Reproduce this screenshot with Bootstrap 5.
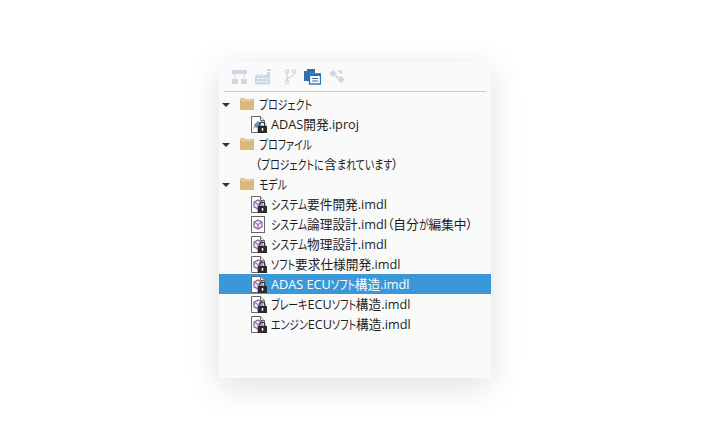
<!DOCTYPE html>
<html lang="ja">
<head>
<meta charset="utf-8">
<title>モデル</title>
<link href="https://cdn.jsdelivr.net/npm/bootstrap@5.3.0/dist/css/bootstrap.min.css" rel="stylesheet">
<style>
html,body{height:100%;background:#fff;overflow:hidden}
body{font-family:"Open Sans","Noto Sans CJK JP",sans-serif;font-size:12.7px;font-feature-settings:"palt";color:#1c1c1c;padding:62px 0 0 219px}
.pane{width:272px;height:316px;background:#fafafa;box-shadow:0 8px 32px rgba(0,0,0,.13)}
.tools{height:30px;margin:0 5px;padding:0 8px 0 8px;border-bottom:1px solid #c9c9c9;gap:8px}
.tools svg{display:block;flex:none}
.t3{margin-left:3px}
.tree{margin-top:2px}
.trow{height:20px;white-space:nowrap;line-height:20px}
.trow.sel{background:#3a98d8;color:#fff}
.arrow{width:0;height:0;border-left:4px solid transparent;border-right:4px solid transparent;border-top:4px solid #333;margin:1px 10px 0 3px;flex:none}
.fold{margin-right:5px;flex:none}
.leaf{margin-left:32px}
.leaf svg{margin-right:4px;flex:none}
.plain{margin-left:36px}
.kn{display:inline-block;transform:scaleX(.78);transform-origin:0 50%}
</style>
</head>
<body>
<svg width="0" height="0" class="position-absolute">
<symbol id="lock" viewBox="0 0 16 17">
<path d="M8.800 10V8.700A2.500 2.500 0 0 1 13.800 8.700V10" fill="none" stroke="#3a3a3a" stroke-width="1.300"/>
<rect x="7" y="10" width="9" height="7" fill="#2b2b2b"/>
<rect x="10.800" y="12" width="1.400" height="2.800" fill="#fff"/>
</symbol>
<symbol id="model" viewBox="0 0 16 17">
<path d="M.5.500H9.500L13.500 4.500V10H7V16.500H.5Z" fill="#fff" stroke="#666"/>
<path d="M9.500.5V4.500H13.500" fill="#eee" stroke="#666"/>
<path d="M7 4L11 6.200V10.800L7 13L3 10.800V6.200Z" fill="#efe7f5" stroke="#8a5aa8" stroke-width="1.200"/>
<path d="M3 6.200L7 8.500L11 6.200M7 8.500V13" fill="none" stroke="#8a5aa8"/>
<use href="#lock"/>
</symbol>
<symbol id="folder" viewBox="0 0 14 12">
<path d="M0 1.500V12H14V1H5L4 0H1Z" fill="#dcb67a"/>
<rect x="1" y="1.500" width="12" height="1" fill="#f2e3c8"/>
</symbol>
</svg>
<main class="pane">
<div class="tools d-flex align-items-center">
<svg width="15" height="15" viewBox="0 0 15 15"><g fill="#cbd9e6"><rect x="0" y="1" width="15" height="4"/><rect x="0" y="10" width="6" height="5"/><rect x="9" y="10" width="6" height="5"/><rect x="2.500" y="5" width="1" height="5"/><rect x="11.500" y="5" width="1" height="5"/></g></svg>
<svg width="18" height="16" viewBox="0 0 18 16"><path d="M0 7L4 5V7L8 5V7L12 5V3H15V15.500H0Z" fill="#cbd9e6"/><rect x="12" y="0" width="4" height="2" fill="#cbd9e6"/><g fill="#fafafa"><rect x="2" y="9" width="3" height="1"/><rect x="6" y="9" width="3" height="1"/><rect x="10" y="9" width="3" height="1"/><rect x="2" y="12" width="3" height="1"/><rect x="6" y="12" width="3" height="1"/><rect x="10" y="12" width="3" height="1"/></g></svg>
<svg class="t3" width="12" height="16" viewBox="0 0 12 16" fill="none" stroke="#cbd9e6" stroke-width="1.300"><circle cx="3" cy="2.500" r="1.600"/><circle cx="10" cy="2.500" r="1.600"/><circle cx="3" cy="13" r="1.600"/><path d="M3 4V11.500M10 4V5C10 8 3 7.500 3 11"/></svg>
<svg width="17" height="16" viewBox="0 0 17 16"><path d="M0 2H3V0H11V4H5V12H0Z" fill="#2f6fb0"/><rect x="5.500" y="5" width="11" height="10" fill="#fff" stroke="#2f6fb0" stroke-width="1.400"/><rect x="5" y="4.500" width="12" height="2.500" fill="#2f6fb0"/><rect x="8" y="9" width="6" height="1" fill="#2f6fb0"/><rect x="8" y="11.500" width="6" height="1" fill="#2f6fb0"/></svg>
<svg width="16" height="15" viewBox="0 0 16 15" fill="#cbd9e6"><path d="M0 4.500L4 1L8 4.500L4 8Z"/><path d="M8 10.500L12 7L16 10.500L12 14Z"/><path d="M6 6.500H9L10 9H7Z"/><path d="M9 1.500H13V5H11V3.500H9Z"/></svg>
</div>
<div class="tree">
<div class="trow d-flex align-items-center"><span class="arrow"></span><svg class="fold" width="14" height="12"><use href="#folder"/></svg><span class="lbl">プロジェクト</span></div>
<div class="trow leaf d-flex align-items-center"><svg width="16" height="17" viewBox="0 0 16 17"><path d="M.5.500H9.500L13.500 4.500V10H7V16.500H.5Z" fill="#fff" stroke="#666"/><path d="M9.500.5V4.500H13.500" fill="#eee" stroke="#666"/><path d="M2.500 12L10 6M3.500 9L7 5.500L9.500 8L6 11.500Z" fill="#8aa9c7" stroke="#4a6d90"/><use href="#lock"/></svg><span class="lbl">ADAS開発.iproj</span></div>
<div class="trow d-flex align-items-center"><span class="arrow"></span><svg class="fold" width="14" height="12"><use href="#folder"/></svg><span class="lbl">プロファイル</span></div>
<div class="trow plain d-flex align-items-center"><span class="lbl">（プロジェクトに含まれています）</span></div>
<div class="trow d-flex align-items-center"><span class="arrow"></span><svg class="fold" width="14" height="12"><use href="#folder"/></svg><span class="lbl">モデル</span></div>
<div class="trow leaf d-flex align-items-center"><svg width="16" height="17"><use href="#model"/></svg><span class="lbl">システム要件開発.imdl</span></div>
<div class="trow leaf d-flex align-items-center"><svg width="16" height="17" viewBox="0 0 16 17"><rect x=".5" y=".5" width="13" height="16" fill="#fff" stroke="#666"/><path d="M7 4L11 6.200V10.800L7 13L3 10.800V6.200Z" fill="#efe7f5" stroke="#8a5aa8" stroke-width="1.200"/><path d="M3 6.200L7 8.500L11 6.200M7 8.500V13" fill="none" stroke="#8a5aa8"/></svg><span class="lbl">システム論理設計.imdl（自分が編集中）</span></div>
<div class="trow leaf d-flex align-items-center"><svg width="16" height="17"><use href="#model"/></svg><span class="lbl">システム物理設計.imdl</span></div>
<div class="trow leaf d-flex align-items-center"><svg width="16" height="17"><use href="#model"/></svg><span class="lbl">ソフト要求仕様開発.imdl</span></div>
<div class="trow sel d-flex align-items-center"><span class="leaf d-flex align-items-center"><svg width="16" height="17"><use href="#model"/></svg><span class="lbl">ADAS ECUソフト構造.imdl</span></span></div>
<div class="trow leaf d-flex align-items-center"><svg width="16" height="17"><use href="#model"/></svg><span class="lbl">ブレーキECUソフト構造.imdl</span></div>
<div class="trow leaf d-flex align-items-center"><svg width="16" height="17"><use href="#model"/></svg><span class="lbl">エンジンECUソフト構造.imdl</span></div>
</div>
</main>
<script>
document.querySelectorAll('.lbl').forEach(function(el){
  el.innerHTML=el.textContent.replace(/[\u3040-\u30ff]+/g,'<span class="kn">$&</span>');
  el.querySelectorAll('.kn').forEach(function(k){
    k.style.marginRight=(-0.22*k.getBoundingClientRect().width/0.78)+'px';
  });
});
</script>
</body>
</html>
